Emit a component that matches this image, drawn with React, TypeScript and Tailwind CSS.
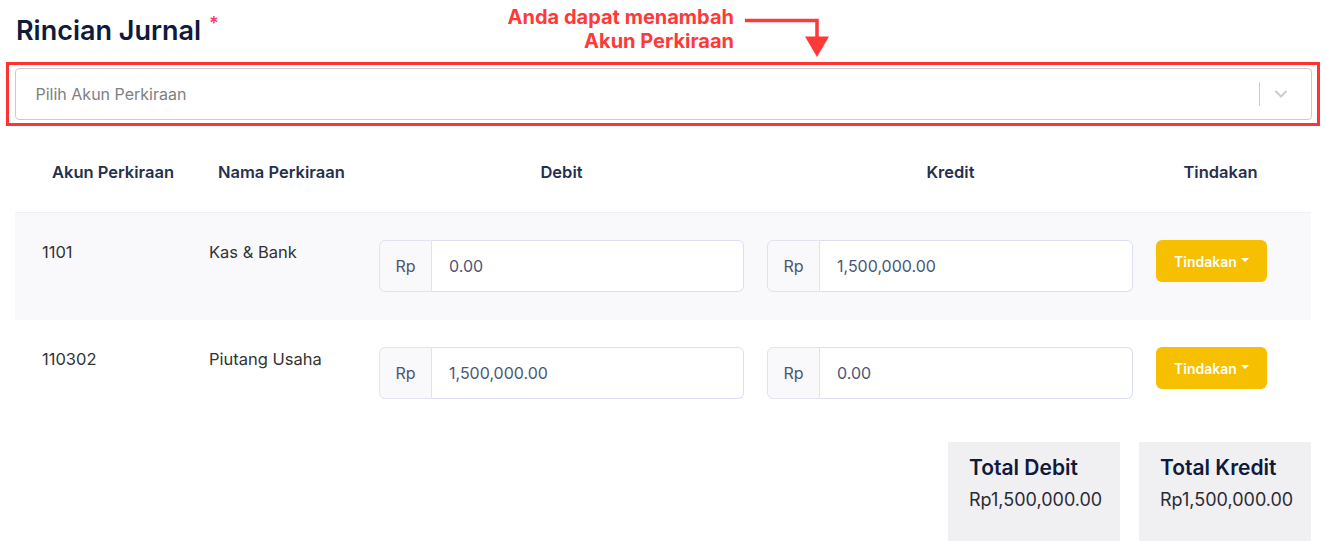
import { ChevronDown } from 'lucide-react';

const rows = [
  { code: '1101', name: 'Kas & Bank', debit: '0.00', kredit: '1,500,000.00', bg: 'bg-[#f9f9fb]' },
  { code: '110302', name: 'Piutang Usaha', debit: '1,500,000.00', kredit: '0.00', bg: 'bg-white' },
];

function MoneyInput({ value }: { value: string }) {
  return (
    <div className="flex h-[52px] w-full">
      <div className="w-[53px] shrink-0 flex items-center justify-center bg-[#f9f9fb] border border-[#e1e3ee] rounded-l-md text-[16px] text-[#4b5675]">
        Rp
      </div>
      <div className="flex-1 flex items-center bg-white border border-l-0 border-[#dcdff0] rounded-r-md pl-[17px] text-[16px] text-[#4b5675]">
        {value}
      </div>
    </div>
  );
}

function ActionButton() {
  return (
    <button className="h-[42px] w-[111px] rounded-md bg-[#f6c000] text-white text-[14px] font-semibold flex items-center justify-center gap-1">
      Tindakan
      <span className="inline-block w-0 h-0 border-l-[4px] border-r-[4px] border-t-[4px] border-l-transparent border-r-transparent border-t-white mb-[2px]" />
    </button>
  );
}

export default function App() {
  return (
    <div className="relative w-[1326px] h-[547px] overflow-hidden bg-white font-['Inter',sans-serif]">
      {/* Title */}
      <div className="pt-[15px] pl-4 h-[62px]">
        <h1 className="text-[27px] leading-[32px] font-semibold text-[#0f1a3c] flex items-start">
          Rincian Jurnal
          <span className="text-[#f1416c] text-[18px] leading-[18px] ml-[8px] mt-[0px]">*</span>
        </h1>
      </div>

      {/* annotation */}
      <div className="absolute left-[440px] top-[5px] w-[294px] text-right text-[20px] leading-[24px] font-bold text-[#ff3838]">
        <div>Anda dapat menambah</div>
        <div>Akun Perkiraan</div>
      </div>
      <svg className="absolute left-[740px] top-[14px]" width="96" height="48" viewBox="0 0 96 48">
        <path d="M5 6.5 H77 V24" fill="none" stroke="#ff3838" strokeWidth="3.5" />
        <path d="M65 22.5 H89 L77 43 Z" fill="#ff3838" />
      </svg>

      {/* select highlighted */}
      <div className="ml-[6px] mr-[6px] border-[3.5px] border-[#ff3333] px-[5.5px] py-[3px]">
        <div className="h-[52px] bg-white border border-[#cccccc] rounded-[4px] flex items-center">
          <span className="flex-1 pl-[20px] text-[16px] text-[#808080]">Pilih Akun Perkiraan</span>
          <span className="w-px h-[24px] bg-[#cccccc]" />
          <span className="px-[11px] pr-[20px] text-[#cccccc]">
            <ChevronDown size={20} strokeWidth={2.5} />
          </span>
        </div>
      </div>

      {/* table */}
      <div className="mx-[15px]">
        <div className="grid grid-cols-[180px_172px_389px_389px_167px] h-[87px] items-end pb-[29px] border-b border-[#eff0f4] text-[16.5px] leading-[22px] font-semibold text-[#26304d]">
          <div className="pl-[37px]">Akun Perkiraan</div>
          <div className="pl-[23px]">Nama Perkiraan</div>
          <div className="text-center">Debit</div>
          <div className="text-center">Kredit</div>
          <div className="pr-[16px] text-center">Tindakan</div>
        </div>

        {rows.map((r) => (
          <div key={r.code} className={`grid grid-cols-[180px_172px_389px_389px_167px] h-[107px] pt-[27px] ${r.bg}`}>
            <div className="pl-[27px] pt-[2px] text-[16.5px] leading-[20px] text-[#333333]">{r.code}</div>
            <div className="pl-[14px] pt-[2px] text-[16.5px] leading-[20px] text-[#333333]">{r.name}</div>
            <div className="pl-[12px] pr-[12px]">
              <MoneyInput value={r.debit} />
            </div>
            <div className="pl-[11px] pr-[12px]">
              <MoneyInput value={r.kredit} />
            </div>
            <div className="pl-[11px]">
              <ActionButton />
            </div>
          </div>
        ))}

        {/* totals */}
        <div className="flex justify-end gap-[19px] mt-[15px]">
          <div className="w-[172px] h-[99px] bg-[#f0f0f3] pl-[21px] pt-[13px]">
            <div className="text-[21px] leading-[26px] font-semibold text-[#0f1a3c]">Total Debit</div>
            <div className="mt-[8px] text-[18px] leading-[22px] text-[#2b2b33]">Rp1,500,000.00</div>
          </div>
          <div className="w-[172px] h-[99px] bg-[#f0f0f3] pl-[21px] pt-[13px]">
            <div className="text-[21px] leading-[26px] font-semibold text-[#0f1a3c]">Total Kredit</div>
            <div className="mt-[8px] text-[18px] leading-[22px] text-[#2b2b33]">Rp1,500,000.00</div>
          </div>
        </div>
      </div>
    </div>
  );
}
